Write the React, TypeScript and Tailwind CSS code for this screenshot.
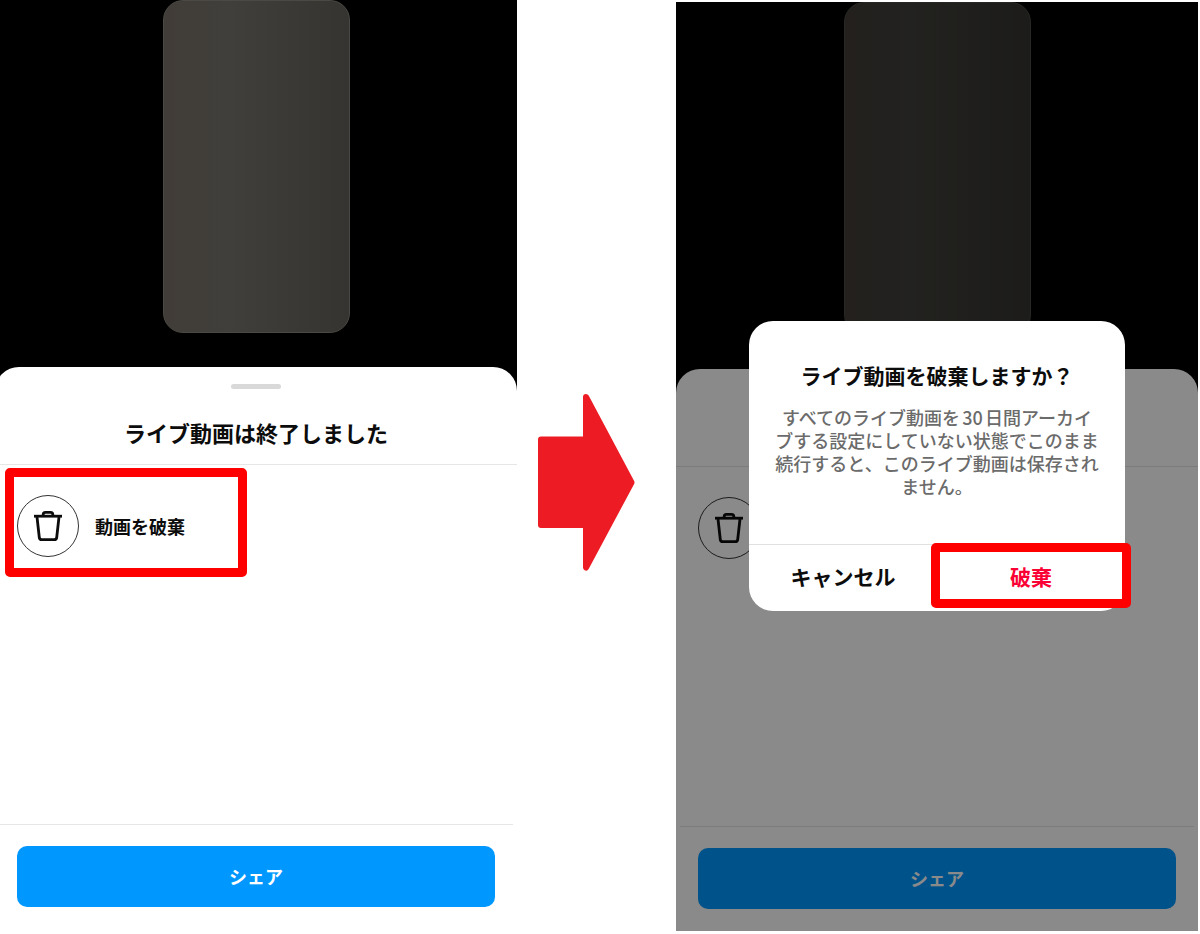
import type { ReactNode } from "react";

type PhoneProps = {
  className?: string;
  contentClassName?: string;
  footerClassName: string;
  title?: string;
  discardLabel?: string;
  highlightDiscard?: boolean;
  children?: ReactNode;
};

function TrashIcon() {
  return (
    <svg viewBox="0 0 32 34" className="h-[34px] w-8" fill="none" stroke="currentColor" strokeWidth="2.8" strokeLinejoin="round" aria-hidden="true">
      <path d="M2 7.200h28" />
      <path d="M11.200 7V5.500a2.200 2.200 0 0 1 2.200-2.200h5.200a2.200 2.200 0 0 1 2.200 2.200V7" />
      <path d="M5 8l2.300 20.500a2.500 2.500 0 0 0 2.500 2.200h12.400a2.500 2.500 0 0 0 2.500-2.200L27 8" />
    </svg>
  );
}

function Arrow() {
  return (
    <svg viewBox="0 0 97 177" className="h-[177px] w-[97px]" aria-hidden="true">
      <path
        d="M3 45.500H48V3L93.500 88.500L48 173.500V131H3Z"
        fill="#ed1c24"
        stroke="#ed1c24"
        strokeWidth="6"
        strokeLinejoin="round"
      />
    </svg>
  );
}

function Highlight({ className }: { className: string }) {
  return <span className={`pointer-events-none absolute rounded-[5px] border-[9px] border-[#ff0000] ${className}`} />;
}

function Phone({
  className = "",
  contentClassName = "",
  footerClassName,
  title,
  discardLabel,
  highlightDiscard,
  children
}: PhoneProps) {
  return (
    <section className={`relative flex flex-col overflow-hidden bg-black ${className}`}>
      <div className={`flex flex-1 flex-col ${contentClassName}`}>
        {/* Video preview */}
        <div className="flex h-[367px] justify-center">
          <div className="h-[333px] w-[187px] rounded-[20px] border border-[#4a4943] bg-linear-to-r from-[#413c38] via-[#403f3b] via-35% to-[#353430]" />
        </div>

        {/* Bottom sheet */}
        <div className="flex flex-1 flex-col rounded-t-3xl bg-white">
          <header className="flex h-[98px] flex-col items-center border-b border-[#e6e6e6] pt-[17px]">
            <div className="h-[5px] w-[50px] rounded-full bg-[#d9d9d9]" />
            {title && <h1 className="mt-[27px] text-[22px] leading-8 font-bold">{title}</h1>}
          </header>
          <div className="flex-1 px-[22px] pt-[30px]">
            <button type="button" aria-label="動画を破棄" className="relative flex items-center gap-4">
              <span className="flex size-[62px] items-center justify-center rounded-full border border-[#333]">
                <TrashIcon />
              </span>
              {discardLabel && <span className="text-lg font-bold">{discardLabel}</span>}
              {highlightDiscard && <Highlight className="-top-[27px] -left-3 h-[109px] w-[242px]" />}
            </button>
          </div>
          <div className="mx-1 border-t border-[#e6e6e6]" />
          <footer className={`px-[22px] pt-[21px] ${footerClassName}`}>
            <button type="button" className="h-[61px] w-full rounded-[10px] bg-[#0098ff] pb-0.5 text-lg font-bold text-white">
              シェア
            </button>
          </footer>
        </div>
      </div>
      {children}
    </section>
  );
}

function DiscardDialog() {
  return (
    <div className="absolute inset-0 flex items-center justify-center bg-black/46 pb-0.5">
      <div role="dialog" aria-labelledby="discard-title" className="w-[376px] rounded-3xl bg-white text-center">
        <div className="h-[223px] pt-[38px]">
          <h2 id="discard-title" className="text-[21px] leading-8 font-bold">
            ライブ動画を破棄しますか？
          </h2>
          <p className="mt-[15px] text-lg leading-[23px] font-medium text-[#6b6b6b] [text-autospace:normal]">
            すべてのライブ動画を30日間アーカイ
            <br />
            ブする設定にしていない状態でこのまま
            <br />
            続行すると、このライブ動画は保存され
            <br />
            ません。
          </p>
        </div>
        <div className="grid h-[67px] grid-cols-2 border-t border-[#e0e0e0] text-[21px] font-bold">
          <button type="button" className="pb-0.5">
            キャンセル
          </button>
          <button type="button" className="relative pb-0.5 text-[#fb0035]">
            破棄
            <Highlight className="-top-0.5 -right-[6px] h-[65px] w-[200px]" />
          </button>
        </div>
      </div>
    </div>
  );
}

export default function App() {
  return (
    <main className="grid min-h-screen grid-cols-[517fr_159fr_522fr] bg-white pr-0.5 font-['Noto_Sans_CJK_JP',sans-serif] text-[#0c0c0c]">
      <Phone
        contentClassName="-ml-[5px]"
        footerClassName="pb-[27px]"
        title="ライブ動画は終了しました"
        discardLabel="動画を破棄"
        highlightDiscard
      />
      <div className="pt-[394px] pl-[21px]">
        <Arrow />
      </div>
      <Phone className="mt-0.5 mb-[3px]" footerClassName="pb-[22px]">
        <DiscardDialog />
      </Phone>
    </main>
  );
}
